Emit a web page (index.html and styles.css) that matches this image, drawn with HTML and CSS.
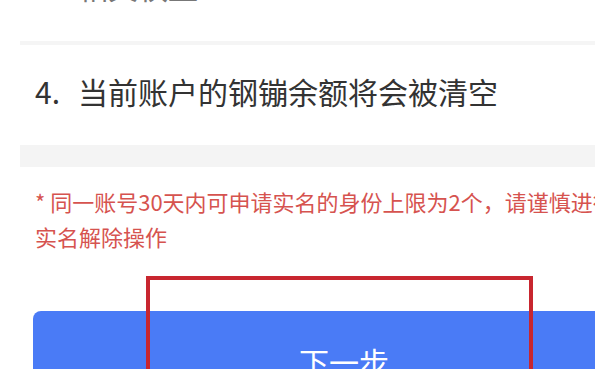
FILE: index.html
```html
<!DOCTYPE html>
<html lang="zh-CN">
<head>
<meta charset="utf-8">
<title>实名解除</title>
<link rel="stylesheet" href="styles.css">
</head>
<body>
<div class="page">
  <div class="prev-line">相关权益</div>
  <div class="divider"></div>
  <div class="item"><span class="num">4.</span><span class="item-text">当前账户的钢镚余额将会被清空</span></div>
  <div class="band"></div>
  <p class="note">* 同一账号30天内可申请实名的身份上限为2个，请谨慎进行<br>实名解除操作</p>
  <div class="actions">
    <button class="btn-next" type="button">下一步</button>
  </div>
  <div class="highlight"></div>
</div>
</body>
</html>
```

FILE: styles.css
```css
html, body {
  margin: 0;
  padding: 0;
  overflow: hidden;
  background: #ffffff;
}

body {
  font-family: "Noto Sans CJK SC", "Noto Sans", sans-serif;
  color: #333333;
}

.page {
  display: flow-root;
  position: relative;
  width: 680px;
}

.prev-line {
  margin-top: -29px;
  padding-left: 78px;
  font-size: 30px;
  line-height: 30px;
  color: #777777;
}

.divider {
  margin: 40px 0 0 20px;
  height: 4px;
  background: #f5f5f5;
}

.item {
  display: flex;
  align-items: center;
  padding: 31px 0 0 35px;
  font-size: 30px;
  line-height: 30px;
  color: #333333;
  white-space: nowrap;
}

.num {
  width: 43px;
  flex: none;
}

.band {
  margin: 39px 0 0 20px;
  height: 22px;
  background: #f4f4f4;
}

.note {
  margin: 17px 0 0 0;
  padding-left: 35px;
  font-size: 22px;
  line-height: 35px;
  color: #d6534f;
  white-space: nowrap;
}

.actions {
  padding: 57px 0 0 33px;
}

.btn-next {
  display: block;
  width: 622px;
  height: 100px;
  border: none;
  border-radius: 8px;
  background: #4a7bf6;
  color: #ffffff;
  font-family: "Noto Sans CJK SC", "Noto Sans", sans-serif;
  font-size: 30px;
  line-height: 100px;
  padding: 0;
  text-align: center;
}

.highlight {
  position: absolute;
  left: 146px;
  top: 276px;
  width: 379px;
  height: 150px;
  border: 4px solid #c8262f;
}
```
